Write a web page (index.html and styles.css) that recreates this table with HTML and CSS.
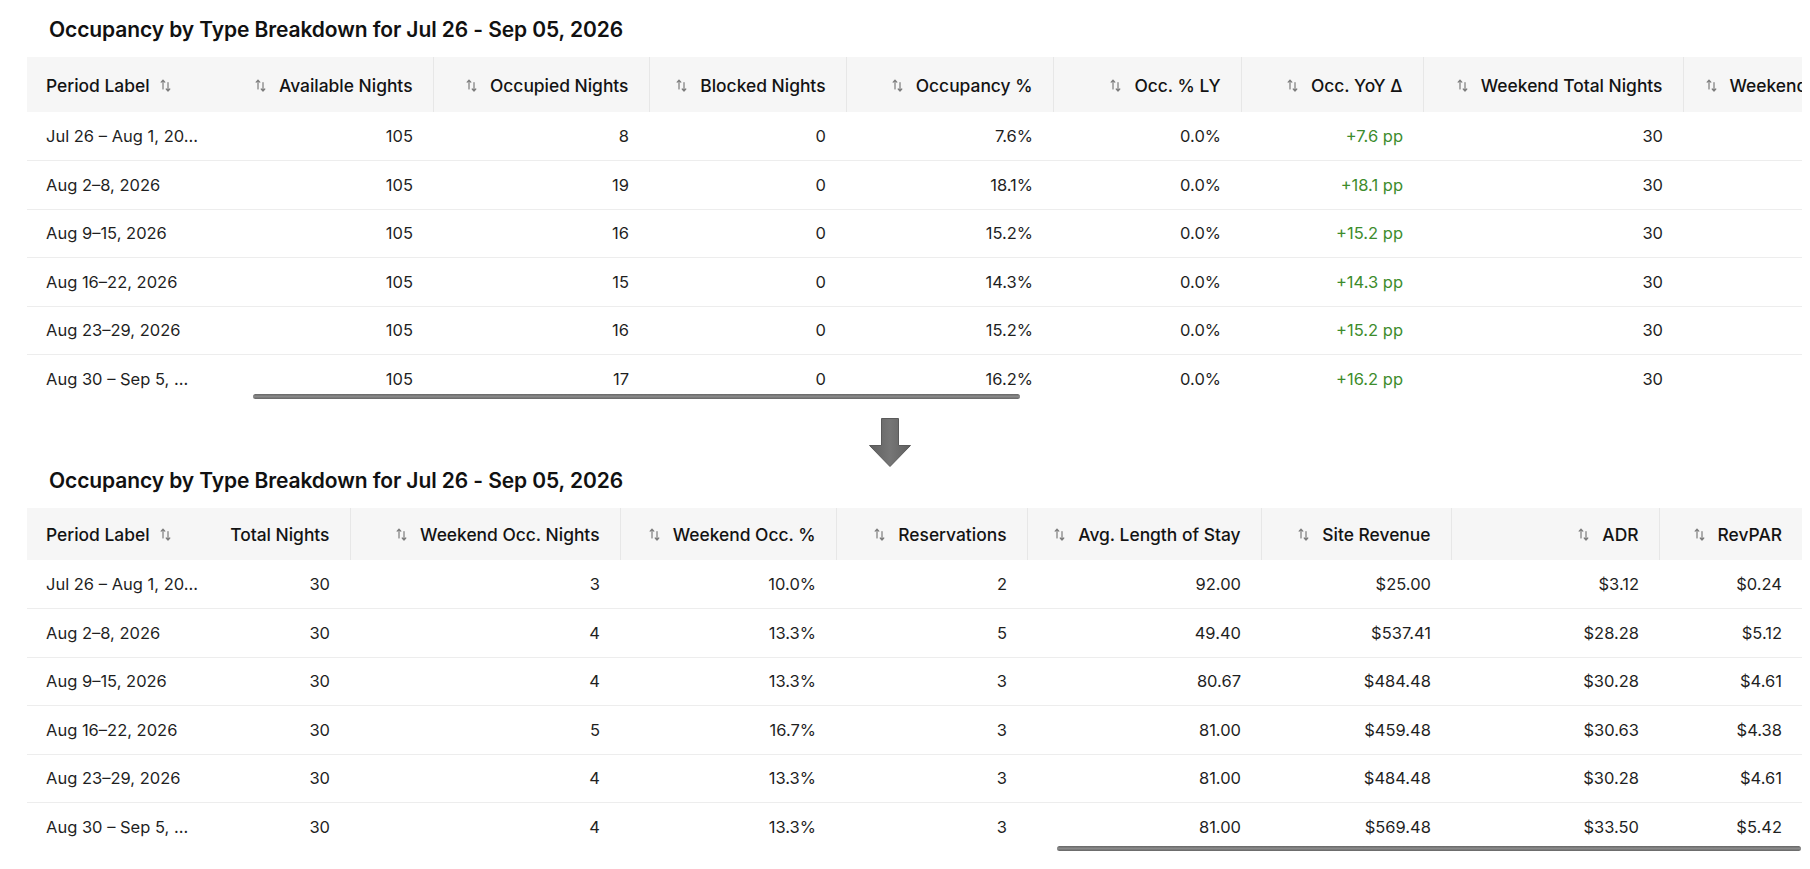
FILE: index.html
```html
<!DOCTYPE html>
<html lang="en">
<head>
<meta charset="utf-8">
<title>Occupancy by Type Breakdown</title>
<link rel="stylesheet" href="styles.css">
</head>
<body>
<svg width="0" height="0" class="defs" aria-hidden="true">
  <defs>
    <symbol id="sort" viewBox="0 0 11 13">
      <path d="M3 10V1.2M1.2 3.2L3 1.2L4.8 3.2" fill="none" stroke="#7c7c7c" stroke-width="1.2" stroke-linecap="round" stroke-linejoin="round"/>
      <path d="M8 3.5V12M6.2 10L8 12L9.8 10" fill="none" stroke="#7c7c7c" stroke-width="1.2" stroke-linecap="round" stroke-linejoin="round"/>
    </symbol>
  </defs>
</svg>
<main class="page">
  <section class="block">
    <h2 class="title">Occupancy by Type Breakdown for Jul 26 - Sep 05, 2026</h2>
    <div class="scroller">
      <table class="grid grid-a">
        <colgroup>
          <col class="w190"><col class="w216"><col class="w216"><col class="w197"><col class="w207"><col class="w188"><col class="w182"><col class="w260"><col class="w238">
        </colgroup>
        <thead>
          <tr>
            <th class="first"><span class="hd">Period Label <svg class="si"><use href="#sort"/></svg></span></th>
            <th class="second"><span class="hd"><svg class="si"><use href="#sort"/></svg>Available Nights</span></th>
            <th><span class="hd"><svg class="si"><use href="#sort"/></svg>Occupied Nights</span></th>
            <th><span class="hd"><svg class="si"><use href="#sort"/></svg>Blocked Nights</span></th>
            <th><span class="hd"><svg class="si"><use href="#sort"/></svg>Occupancy %</span></th>
            <th><span class="hd"><svg class="si"><use href="#sort"/></svg>Occ. % LY</span></th>
            <th><span class="hd"><svg class="si"><use href="#sort"/></svg>Occ. YoY Δ</span></th>
            <th><span class="hd"><svg class="si"><use href="#sort"/></svg>Weekend Total Nights</span></th>
            <th class="lead"><span class="hd"><svg class="si"><use href="#sort"/></svg>Weekend Occ. Nights</span></th>
          </tr>
        </thead>
        <tbody>
          <tr><td class="first">Jul 26 – Aug 1, 20...</td><td>105</td><td>8</td><td>0</td><td>7.6%</td><td>0.0%</td><td class="pos">+7.6 pp</td><td>30</td><td>3</td></tr>
          <tr><td class="first">Aug 2–8, 2026</td><td>105</td><td>19</td><td>0</td><td>18.1%</td><td>0.0%</td><td class="pos">+18.1 pp</td><td>30</td><td>4</td></tr>
          <tr><td class="first">Aug 9–15, 2026</td><td>105</td><td>16</td><td>0</td><td>15.2%</td><td>0.0%</td><td class="pos">+15.2 pp</td><td>30</td><td>4</td></tr>
          <tr><td class="first">Aug 16–22, 2026</td><td>105</td><td>15</td><td>0</td><td>14.3%</td><td>0.0%</td><td class="pos">+14.3 pp</td><td>30</td><td>5</td></tr>
          <tr><td class="first">Aug 23–29, 2026</td><td>105</td><td>16</td><td>0</td><td>15.2%</td><td>0.0%</td><td class="pos">+15.2 pp</td><td>30</td><td>4</td></tr>
          <tr class="last"><td class="first">Aug 30 – Sep 5, ...</td><td>105</td><td>17</td><td>0</td><td>16.2%</td><td>0.0%</td><td class="pos">+16.2 pp</td><td>30</td><td>4</td></tr>
        </tbody>
      </table>
      <div class="thumb thumb-a"></div>
    </div>
  </section>

  <div class="arrow-row">
    <svg class="down-arrow" width="42" height="49" viewBox="0 0 42 49" aria-hidden="true">
      <defs>
        <linearGradient id="ag" x1="0" y1="0" x2="1" y2="0">
          <stop offset="0" stop-color="#5f5f5f"/>
          <stop offset="0.5" stop-color="#767676"/>
          <stop offset="1" stop-color="#5f5f5f"/>
        </linearGradient>
      </defs>
      <path d="M12.5 0.5H29.5V27.5H41.5L21 48.5L0.5 27.5H12.5Z" fill="url(#ag)" stroke="#5a5a5a" stroke-width="1"/>
    </svg>
  </div>

  <section class="block">
    <h2 class="title">Occupancy by Type Breakdown for Jul 26 - Sep 05, 2026</h2>
    <div class="scroller">
      <table class="grid grid-b">
        <colgroup>
          <col class="w190"><col class="w133"><col class="w270"><col class="w216"><col class="w191"><col class="w234"><col class="w190"><col class="w208"><col class="w143">
        </colgroup>
        <thead>
          <tr>
            <th class="first"><span class="hd">Period Label <svg class="si"><use href="#sort"/></svg></span></th>
            <th class="second narrow"><span class="hd">Total Nights</span></th>
            <th><span class="hd"><svg class="si"><use href="#sort"/></svg>Weekend Occ. Nights</span></th>
            <th><span class="hd"><svg class="si"><use href="#sort"/></svg>Weekend Occ. %</span></th>
            <th><span class="hd"><svg class="si"><use href="#sort"/></svg>Reservations</span></th>
            <th><span class="hd"><svg class="si"><use href="#sort"/></svg>Avg. Length of Stay</span></th>
            <th><span class="hd"><svg class="si"><use href="#sort"/></svg>Site Revenue</span></th>
            <th><span class="hd"><svg class="si"><use href="#sort"/></svg>ADR</span></th>
            <th><span class="hd"><svg class="si"><use href="#sort"/></svg>RevPAR</span></th>
          </tr>
        </thead>
        <tbody>
          <tr><td class="first">Jul 26 – Aug 1, 20...</td><td>30</td><td>3</td><td>10.0%</td><td>2</td><td>92.00</td><td>$25.00</td><td>$3.12</td><td>$0.24</td></tr>
          <tr><td class="first">Aug 2–8, 2026</td><td>30</td><td>4</td><td>13.3%</td><td>5</td><td>49.40</td><td>$537.41</td><td>$28.28</td><td>$5.12</td></tr>
          <tr><td class="first">Aug 9–15, 2026</td><td>30</td><td>4</td><td>13.3%</td><td>3</td><td>80.67</td><td>$484.48</td><td>$30.28</td><td>$4.61</td></tr>
          <tr><td class="first">Aug 16–22, 2026</td><td>30</td><td>5</td><td>16.7%</td><td>3</td><td>81.00</td><td>$459.48</td><td>$30.63</td><td>$4.38</td></tr>
          <tr><td class="first">Aug 23–29, 2026</td><td>30</td><td>4</td><td>13.3%</td><td>3</td><td>81.00</td><td>$484.48</td><td>$30.28</td><td>$4.61</td></tr>
          <tr class="last"><td class="first">Aug 30 – Sep 5, ...</td><td>30</td><td>4</td><td>13.3%</td><td>3</td><td>81.00</td><td>$569.48</td><td>$33.50</td><td>$5.42</td></tr>
        </tbody>
      </table>
      <div class="thumb thumb-b"></div>
    </div>
  </section>
</main>
</body>
</html>
```

FILE: styles.css
```css
* { box-sizing: border-box; }

html, body {
  margin: 0;
  background: #ffffff;
}

body {
  font-family: Inter, "Liberation Sans", Arial, sans-serif;
  color: #1d1d1d;
  overflow: hidden;
}

.defs {
  position: absolute;
  width: 0;
  height: 0;
}

.page {
  width: 1810px;
  padding: 18px 8px 0 27px;
}

.title {
  margin: 0 0 15px 22px;
  font-size: 21px;
  line-height: 24px;
  font-weight: 600;
  letter-spacing: -0.1px;
  color: #111111;
}

.scroller {
  position: relative;
  overflow: hidden;
  width: 1775px;
}

.grid {
  border-collapse: collapse;
  table-layout: fixed;
}

.grid-a { width: 1894px; }
.grid-b { width: 1775px; }

.w133 { width: 133px; }
.w143 { width: 143px; }
.w182 { width: 182px; }
.w188 { width: 188px; }
.w190 { width: 190px; }
.w191 { width: 191px; }
.w197 { width: 197px; }
.w207 { width: 207px; }
.w208 { width: 208px; }
.w216 { width: 216px; }
.w234 { width: 234px; }
.w238 { width: 238px; }
.w260 { width: 260px; }
.w270 { width: 270px; }

.grid th {
  height: 55px;
  padding: 0 20px;
  background: #f6f6f6;
  border-left: 1px solid #e7e7e7;
  font-size: 17.4px;
  font-weight: 500;
  color: #131313;
  text-align: right;
  white-space: nowrap;
  overflow: hidden;
}

.grid-b th {
  height: 52px;
}

.grid th.first {
  text-align: left;
  padding-left: 19px;
  border-left: none;
}

.grid th.second {
  border-left: none;
}

.grid th.narrow {
  padding-left: 6px;
}

.grid th.lead {
  text-align: left;
  padding-left: 22px;
}

.hd {
  display: inline-flex;
  align-items: center;
  gap: 13px;
  vertical-align: middle;
}

.grid th.first .hd {
  gap: 10px;
}

.si {
  width: 11px;
  height: 13px;
  flex: none;
}

.grid td {
  height: 48.5px;
  padding: 0 20px;
  border-bottom: 1px solid #ededed;
  font-size: 16.5px;
  font-weight: 400;
  color: #1f1f1f;
  text-align: right;
  white-space: nowrap;
  overflow: hidden;
}

.grid tr.last td {
  border-bottom: none;
}

.grid td.first {
  text-align: left;
  padding-left: 19px;
}

.grid td.pos {
  color: #3d8c2c;
}

.thumb {
  position: absolute;
  height: 5px;
  border-radius: 3px;
  background: linear-gradient(#666666, #8a8a8a 50%, #666666);
}

.thumb-a {
  left: 226px;
  width: 767px;
  bottom: 4px;
}

.thumb-b {
  left: 1030px;
  width: 744px;
  bottom: 0;
}

.arrow-row {
  display: flex;
  padding: 15px 0 2px 842px;
}

.down-arrow {
  display: block;
}
```
